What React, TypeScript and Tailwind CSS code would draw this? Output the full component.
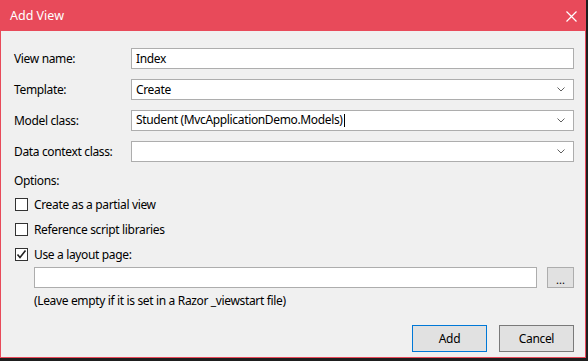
import React from 'react';

const font = { fontFamily: '"Noto Sans", "Open Sans", sans-serif' };

const Chevron = () => (
  <svg width="8" height="5" viewBox="0 0 8 5" className="text-[#606060]">
    <path d="M0.5 0.5 L4 4 L7.5 0.5" fill="none" stroke="currentColor" strokeWidth="1" />
  </svg>
);

const Field: React.FC<{ label: string; value?: string; select?: boolean; caret?: boolean }> = ({ label, value = '', select, caret }) => (
  <div className="flex items-center h-[21px]">
    <div className="w-[117px] text-[12px] text-black tracking-[-0.35px]">{label}</div>
    <div className="flex-1 h-[21px] bg-white border border-[#adadad] flex items-center pl-[4px] pr-[8px]">
      <span className="flex-1 text-[12px] text-black leading-none tracking-[-0.35px]">
        {value}
        {caret && <span className="inline-block w-[1px] h-[13px] bg-black align-middle ml-[1px]" />}
      </span>
      {select && <Chevron />}
    </div>
  </div>
);

const Check: React.FC<{ label: string; checked?: boolean }> = ({ label, checked }) => (
  <div className="flex items-center h-[13px]">
    <div className="w-[13px] h-[13px] border border-[#333333] bg-white flex items-center justify-center">
      {checked && (
        <svg width="11" height="11" viewBox="0 0 11 11">
          <path d="M1.5 5.5 L4 8.5 L9.5 1.5" fill="none" stroke="#222" strokeWidth="1.6" />
        </svg>
      )}
    </div>
    <span className="ml-[6px] text-[12px] text-black tracking-[-0.35px]">{label}</span>
  </div>
);

const App: React.FC = () => {
  return (
    <div className="w-[588px] h-[361px] bg-[#1e1e1e] overflow-hidden" style={font}>
      <div className="w-[586px] h-[358px] border border-[#e84a5a] bg-[#f0f0f0] flex flex-col">
        <div className="h-[30px] bg-[#e84a5a] flex items-center pl-[9px] pr-[8px] shrink-0">
          <span className="flex-1 text-white text-[12.5px]">Add View</span>
          <svg width="11" height="11" viewBox="0 0 11 11">
            <path d="M0.5 0.5 L10.5 10.5 M10.5 0.5 L0.5 10.5" stroke="white" strokeWidth="1.2" />
          </svg>
        </div>

        <div className="flex flex-col pl-[13px] pr-[11px] pt-[17px] tracking-[-0.35px]">
          <div className="flex flex-col gap-[10px]">
            <Field label="View name:" value="Index" />
            <Field label="Template:" value="Create" select />
            <Field label="Model class:" value="Student (MvcApplicationDemo.Models)" select caret />
            <Field label="Data context class:" select />
          </div>

          <div className="mt-[11px] text-[12px] text-black h-[16px] leading-[16px]">Options:</div>

          <div className="flex flex-col gap-[12px] mt-[9px] pl-[1px]">
            <Check label="Create as a partial view" />
            <Check label="Reference script libraries" />
            <Check label="Use a layout page:" checked />
          </div>

          <div className="flex items-center mt-[6px] pl-[20px]">
            <div className="flex-1 h-[21px] bg-white border border-[#adadad]" />
            <button className="ml-[10px] w-[27px] h-[21px] bg-[#e1e1e1] border border-[#adadad] text-[11px] leading-none pb-[2px] flex items-end justify-center tracking-normal">
              ...
            </button>
          </div>

          <div className="pl-[20px] mt-[5px] text-[12px] text-black h-[16px] leading-[16px]">
            (Leave empty if it is set in a Razor _viewstart file)
          </div>

          <div className="flex justify-end gap-[12px] mt-[16px]">
            <button className="w-[75px] h-[27px] bg-[#e1e1e1] border border-[#0078d7] text-[12px] text-black">Add</button>
            <button className="w-[75px] h-[27px] bg-[#e1e1e1] border border-[#7a7a7a] text-[12px] text-black">Cancel</button>
          </div>
        </div>
      </div>
    </div>
  );
};

export default App;
